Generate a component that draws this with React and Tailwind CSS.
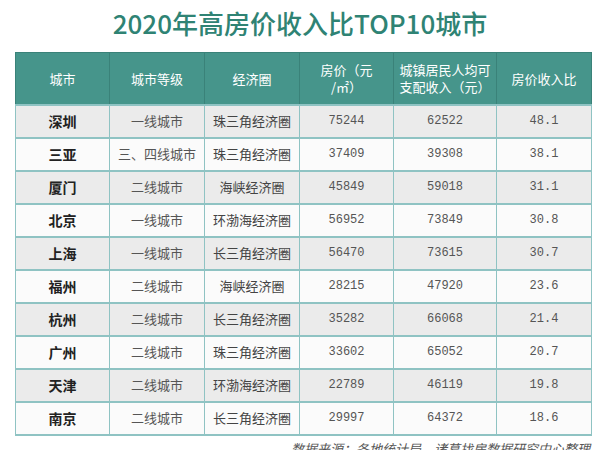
import React from "react";

const rows = [
  ["深圳", "一线城市", "珠三角经济圈", "75244", "62522", "48.1"],
  ["三亚", "三、四线城市", "珠三角经济圈", "37409", "39308", "38.1"],
  ["厦门", "二线城市", "海峡经济圈", "45849", "59018", "31.1"],
  ["北京", "一线城市", "环渤海经济圈", "56952", "73849", "30.8"],
  ["上海", "一线城市", "长三角经济圈", "56470", "73615", "30.7"],
  ["福州", "二线城市", "海峡经济圈", "28215", "47920", "23.6"],
  ["杭州", "二线城市", "长三角经济圈", "35282", "66068", "21.4"],
  ["广州", "二线城市", "珠三角经济圈", "33602", "65052", "20.7"],
  ["天津", "二线城市", "环渤海经济圈", "22789", "46119", "19.8"],
  ["南京", "二线城市", "长三角经济圈", "29997", "64372", "18.6"],
];

const cjk = { fontFamily: '"Noto Sans CJK SC", "Noto Sans", sans-serif' };
const mono = { fontFamily: '"Liberation Mono", "Noto Sans CJK SC", monospace' };

export default function App() {
  return (
    <div className="w-[600px] h-[450px] overflow-hidden bg-white" style={cjk}>
      {/* Title */}
      <h1 className="h-[52px] pt-[5px] text-center text-[26px] font-medium leading-[36px] text-[#2f8374]">
        2020年高房价收入比TOP10城市
      </h1>

      <div className="pl-[15px]">
        <table className="w-[576px] table-fixed border-collapse border border-[#7bb8b6] text-center">
          <colgroup>
            <col className="w-[94px]" />
            <col className="w-[95px]" />
            <col className="w-[95px]" />
            <col className="w-[94px]" />
            <col className="w-[103px]" />
            <col className="w-[95px]" />
          </colgroup>
          <thead>
            <tr className="h-[52px] bg-[#46958b] text-[13px] leading-[17px] text-white">
              <th className="border border-[#3a8279] font-normal">城市</th>
              <th className="border border-[#3a8279] font-normal">城市等级</th>
              <th className="border border-[#3a8279] font-normal">经济圈</th>
              <th className="border border-[#3a8279] font-normal">
                房价（元
                <br />
                /㎡）
              </th>
              <th className="border border-[#3a8279] font-normal">
                城镇居民人均可
                <br />
                支配收入（元）
              </th>
              <th className="border border-[#3a8279] font-normal">房价收入比</th>
            </tr>
          </thead>
          <tbody>
            {rows.map((r, i) => (
              <tr
                key={r[0]}
                className={i % 2 === 0 ? "h-[33px] bg-[#ebebeb]" : "h-[33px] bg-[#fbfbfb]"}
              >
                <td className="border-x border-y-2 border-[#8fc3c3] text-[14px] font-bold text-[#222]">
                  {r[0]}
                </td>
                <td className="border-x border-y-2 border-[#8fc3c3] text-[13px] text-[#555]">{r[1]}</td>
                <td className="border-x border-y-2 border-[#8fc3c3] text-[13px] text-[#444]">{r[2]}</td>
                <td className="border-x border-y-2 border-[#8fc3c3] text-[12px] text-[#555]" style={mono}>
                  {r[3]}
                </td>
                <td className="border-x border-y-2 border-[#8fc3c3] text-[12px] text-[#555]" style={mono}>
                  {r[4]}
                </td>
                <td className="border-x border-y-2 border-[#8fc3c3] text-[12px] text-[#555]" style={mono}>
                  {r[5]}
                </td>
              </tr>
            ))}
          </tbody>
        </table>
      </div>

      {/* Source note */}
      <p className="mt-[4px] pr-[10px] text-right text-[13px] italic leading-[18px] text-[#555]">
        数据来源：各地统计局、诸葛找房数据研究中心整理
      </p>
    </div>
  );
}
